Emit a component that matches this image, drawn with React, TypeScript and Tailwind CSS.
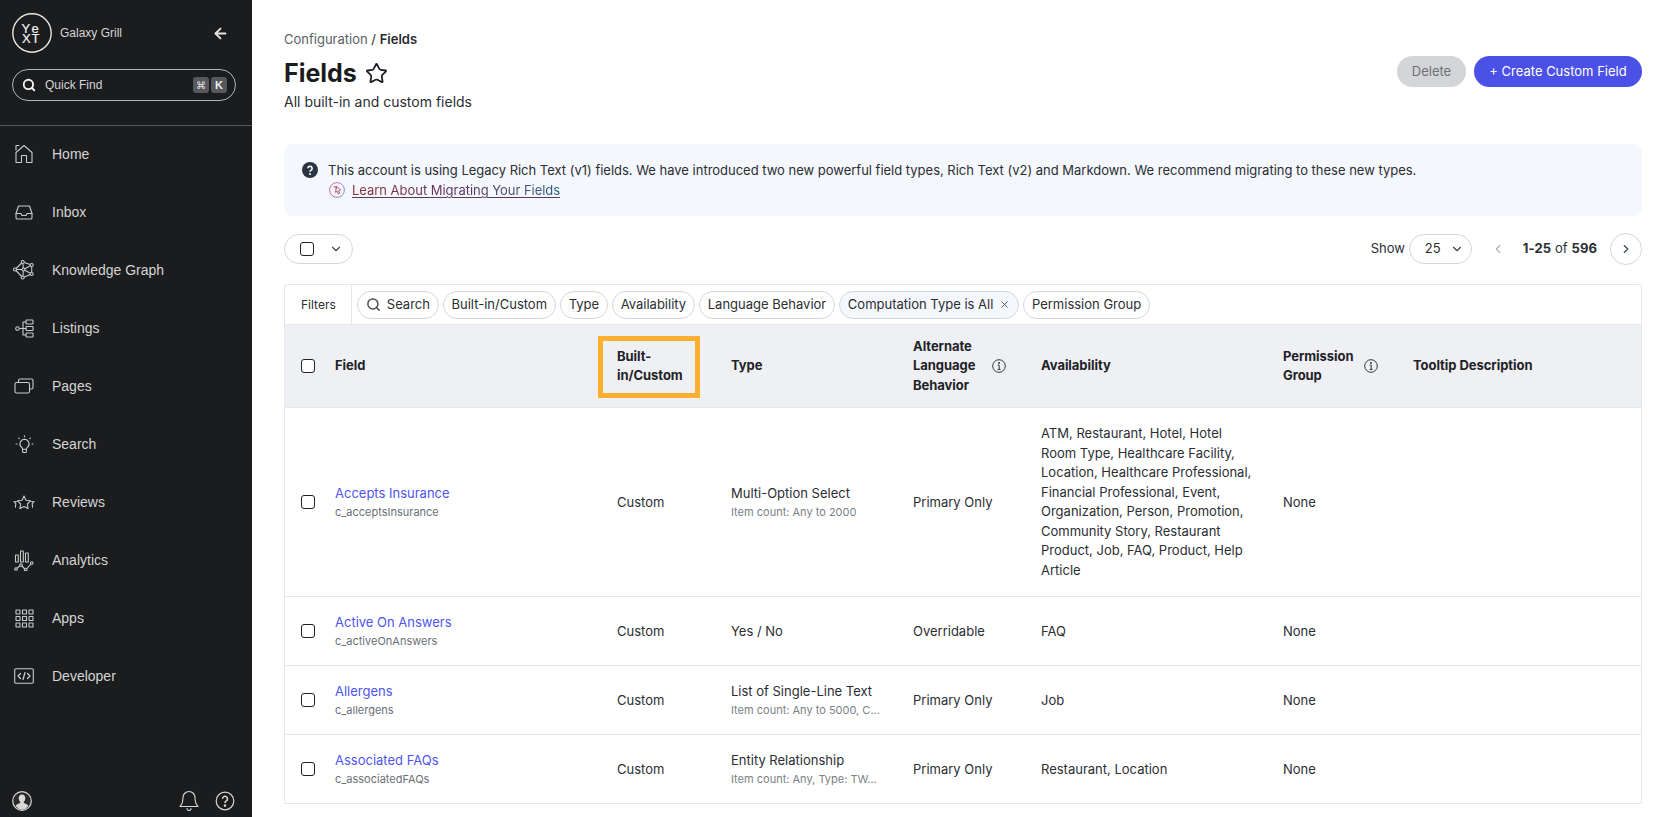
import { ArrowLeft, ChevronDown, ChevronLeft, ChevronRight, Search, Star, X } from "lucide-react";
import type { ReactNode } from "react";

const S = { fill: "none", stroke: "#c9cacb", strokeWidth: 1.1, strokeLinecap: "round" as const, strokeLinejoin: "round" as const };

function Home() {
  return (
    <svg width="18" height="20" viewBox="0 0 18 20" {...S}>
      <path d="M1 18.5V8.5L9 1.5l8 7v10h-5.5v-7h-5v7Z" />
      <path d="M1 6V1.5h3" />
    </svg>
  );
}
function Inbox() {
  return (
    <svg width="18" height="15" viewBox="0 0 18 15" {...S}>
      <path d="M3.5 1h11L17 8.5V12.5a1.5 1.5 0 0 1-1.5 1.5h-13A1.5 1.5 0 0 1 1 12.5V8.5Z" />
      <path d="M1 8.5h5l1 2h4l1-2h5" />
    </svg>
  );
}
function Graph() {
  const n = [[9.7, 2], [18.7, 5], [18.7, 14], [9.7, 17.5], [2, 9.5], [10.5, 9.5]];
  return (
    <svg width="22" height="20" viewBox="0 0 22 20" {...S}>
      <path d="M9.7 2 18.7 5 18.7 14 9.7 17.5 2 9.5Z" />
      <path d="M10.5 9.5 9.7 2M10.5 9.5 18.7 5M10.5 9.5 18.7 14M10.5 9.5 9.7 17.5M10.5 9.5 2 9.5" />
      {n.map(([x, y]) => <circle key={`${x}${y}`} cx={x} cy={y} r="1.5" fill="#1b1c1e" />)}
    </svg>
  );
}
function Listings() {
  return (
    <svg width="19" height="19" viewBox="0 0 19 19" {...S}>
      <circle cx="2.5" cy="9.5" r="1.8" />
      <path d="M4.5 9.5H11M8 3v13M8 3h3M8 16h3" />
      <rect x="11" y="1" width="7" height="4" rx="0.6" />
      <rect x="11" y="7.5" width="7" height="4" rx="0.6" />
      <rect x="11" y="14" width="7" height="4" rx="0.6" />
    </svg>
  );
}
function Pages() {
  return (
    <svg width="20" height="16" viewBox="0 0 20 16" {...S}>
      <rect x="1" y="4.5" width="14.5" height="10.5" rx="1.5" />
      <path d="M4.5 4.5V2.5A1.5 1.5 0 0 1 6 1h11.5A1.5 1.5 0 0 1 19 2.5v7a1.5 1.5 0 0 1-1.5 1.5h-2" />
    </svg>
  );
}
function Bulb() {
  return (
    <svg width="19" height="19" viewBox="0 0 19 19" {...S}>
      <path d="M9.5 4.2a4.6 4.6 0 0 0-2.8 8.2c.7.6.9 1.2.9 1.9h3.8c0-.7.2-1.3.9-1.9a4.6 4.6 0 0 0-2.8-8.2Z" />
      <path d="M7.6 14.3v2.2a1 1 0 0 0 1 1h1.8a1 1 0 0 0 1-1v-2.2M9.5 .8v1M3.6 3l.6.7M15.4 3l-.6.7M1 9h1M17 9h1" />
    </svg>
  );
}
function Reviews() {
  return (
    <svg width="22" height="14" viewBox="0 0 22 14" {...S}>
      <path d="M11 1l2 4.2 4.5.6-3.2 3.2.8 4.5L11 11.4l-4.1 2.1.8-4.5L4.5 5.8 9 5.2Z" />
      <path d="M3.5 6.5l-2.5.4 1.8 1.8-.4 3.6M18.5 6.5l2.5.4-1.8 1.8.4 3.6" />
    </svg>
  );
}
function Analytics() {
  return (
    <svg width="20" height="21" viewBox="0 0 20 21" {...S}>
      <rect x="1.5" y="5" width="2.8" height="7" rx="0.3" />
      <rect x="6.5" y="1" width="2.8" height="11" rx="0.3" />
      <rect x="11.5" y="3" width="2.8" height="9" rx="0.3" />
      <path d="M2 19 7 15l4.7 5 6-7" />
      <circle cx="2" cy="19" r="1.3" fill="#1b1c1e" />
      <circle cx="7" cy="15" r="1.3" fill="#1b1c1e" />
      <circle cx="11.7" cy="19.5" r="1.3" fill="#1b1c1e" />
      <circle cx="17.7" cy="13" r="1.3" fill="#1b1c1e" />
    </svg>
  );
}
function Apps() {
  const c = [1, 7.5, 14];
  return (
    <svg width="19" height="19" viewBox="0 0 19 19" {...S}>
      {c.map((y) => c.map((x) => <rect key={`${x}-${y}`} x={x} y={y} width="4" height="4" rx="0.3" />))}
    </svg>
  );
}
function Developer() {
  return (
    <svg width="20" height="16" viewBox="0 0 20 16" {...S}>
      <rect x="0.7" y="0.7" width="18.6" height="14.6" rx="1.2" />
      <path d="M6.5 5.5 4 8l2.5 2.5M13.5 5.5 16 8l-2.5 2.5M11 4.5 9 11.5" strokeWidth="1.3" />
    </svg>
  );
}

const NAV: [string, ReactNode][] = [
  ["Home", <Home />],
  ["Inbox", <Inbox />],
  ["Knowledge Graph", <Graph />],
  ["Listings", <Listings />],
  ["Pages", <Pages />],
  ["Search", <Bulb />],
  ["Reviews", <Reviews />],
  ["Analytics", <Analytics />],
  ["Apps", <Apps />],
  ["Developer", <Developer />],
];

function Sidebar() {
  return (
    <aside className="w-[252px] shrink-0 h-full bg-[#1b1c1e] flex flex-col font-['Liberation_Sans',sans-serif] text-[#d9d9d9]">
      <div className="flex items-center pl-[12px] pr-[23px] pt-[13px]">
        <svg width="40" height="40" viewBox="0 0 40 40" fill="none">
          <circle cx="20" cy="20" r="19.2" stroke="#e8e8e8" strokeWidth="1.4" />
          <text fontFamily="Liberation Sans" fontSize="13" fill="#f2f2f2" stroke="#f2f2f2" strokeWidth="0.2">
            <tspan x="9.5" y="20">Y</tspan>
            <tspan x="19.5" y="20">e</tspan>
            <tspan x="10" y="30">X</tspan>
            <tspan x="19.5" y="30">T</tspan>
          </text>
        </svg>
        <span className="ml-[8px] text-[12px] text-[#d6d6d6]">Galaxy Grill</span>
        <ArrowLeft className="ml-auto text-[#e4e4e4]" size={17} strokeWidth={2.6} />
      </div>
      <div className="mx-[12px] mt-[16px] h-[32px] w-[224px] rounded-full border border-[#b5b5b5] flex items-center pl-[9px] pr-[8px]">
        <Search className="text-[#f2f2f2]" size={14} strokeWidth={3.2} />
        <span className="ml-[9px] text-[12px] text-[#d6d6d6]">Quick Find</span>
        <span className="ml-auto w-[16px] h-[16px] rounded-[3px] bg-[#56585b] flex items-center justify-center text-[10px] text-[#e6e6e6] font-['DejaVu_Sans',sans-serif]">⌘</span>
        <span className="ml-[2px] w-[16px] h-[16px] rounded-[3px] bg-[#56585b] flex items-center justify-center text-[11px] font-bold text-[#ededed]">K</span>
      </div>
      <div className="mt-[24px] h-px bg-[#55565a]" />
      <nav className="flex flex-col mt-[-1px]">
        {NAV.map(([name, icon]) => (
          <div key={name} className="h-[58px] flex items-center">
            <div className="w-[48px] flex items-center justify-center shrink-0">{icon}</div>
            <span className="ml-[4px] text-[14px] text-[#d4d4d4]">{name}</span>
          </div>
        ))}
      </nav>
      <div className="mt-auto flex items-center pl-[12px] pb-[6px] pr-[17px]">
        <svg width="20" height="20" viewBox="0 0 20 20">
          <circle cx="10" cy="10" r="9.3" fill="#2a2b2d" stroke="#d8d8d8" strokeWidth="1.2" />
          <path d="M10 3.5c2 0 3.3 1.6 3.3 3.8 0 1.6-.8 3-1.6 3.7 0 .8.4 1.2 1.4 1.6 1.5.5 2.7 1.2 3.2 2.3A9 9 0 0 1 10 18.8a9 9 0 0 1-6.3-3.9c.5-1.1 1.7-1.8 3.2-2.3 1-.4 1.4-.8 1.4-1.6-.8-.7-1.6-2.1-1.6-3.7 0-2.2 1.3-3.8 3.3-3.8Z" fill="#d8d8d8" />
        </svg>
        <svg className="ml-auto" width="20" height="21" viewBox="0 0 20 21" {...S} stroke="#d8d8d8">
          <path d="M10 1.5a6 6 0 0 0-6 6c0 5-1 7-3 9h18c-2-2-3-4-3-9a6 6 0 0 0-6-6Z" />
          <path d="M8 18.5a2 2 0 0 0 4 0" />
        </svg>
        <svg className="ml-[16px]" width="20" height="20" viewBox="0 0 20 20" fill="none" stroke="#d8d8d8" strokeWidth="1.2">
          <circle cx="10" cy="10" r="8.8" />
          <path d="M7.5 7.7a2.5 2.5 0 1 1 3.8 2.2c-.9.5-1.3 1-1.3 2" strokeWidth="1.6" />
          <circle cx="10" cy="14.6" r="0.7" fill="#d8d8d8" />
        </svg>
      </div>
    </aside>
  );
}

function Box() {
  return <span className="block w-[14px] h-[14px] rounded-[3px] border border-[#1f2329] bg-white" />;
}

function Chip({ children, active }: { children: ReactNode; active?: boolean }) {
  return (
    <span className={`h-[28px] px-[7.8px] rounded-full border border-[#d5d7db] flex items-center text-[13px] text-[#2b2e33] whitespace-nowrap ${active ? "bg-[#f4f7fc]" : "bg-white"}`}>
      {children}
    </span>
  );
}

function InfoIcon({ className }: { className?: string }) {
  return (
    <svg className={className} width="14" height="14" viewBox="0 0 14 14" fill="none" stroke="#33373d" strokeWidth="1">
      <circle cx="7" cy="7" r="6.3" />
      <path d="M5.6 6.2H7.2V10.4M5.6 10.4H8.6" />
      <circle cx="7" cy="4" r="0.6" fill="#33373d" />
    </svg>
  );
}

const COLS = "grid grid-cols-[50px_282px_114px_182px_128px_242px_130px_1fr] items-center";

function Row({ name, api, type, sub, lang, avail, cls }: { name: string; api: string; type: string; sub?: string; lang: string; avail: string; cls: string }) {
  return (
    <div className={`${COLS} border-b border-[#e5e7ec] pt-[2px] ${cls} text-[13px] leading-[19.5px] text-[#2b2e33]`}>
      <div className="pl-[16px] mt-[-2px]"><Box /></div>
      <div>
        <div className="text-[#4f55f1]">{name}</div>
        <div className="text-[11px] text-[#6b6f76] mt-[-0.5px]">{api}</div>
      </div>
      <div>Custom</div>
      <div>
        <div>{type}</div>
        {sub && <div className="text-[11px] text-[#7b7f86]">{sub}</div>}
      </div>
      <div>{lang}</div>
      <div className={`w-[212px] ${avail.length > 50 ? "mt-[-2px]" : ""}`}>{avail}</div>
      <div>None</div>
      <div />
    </div>
  );
}

function Th({ children }: { children: ReactNode }) {
  return <div className="font-bold text-[13px] leading-[19.5px] text-[#1f2227] tracking-[-0.05px]">{children}</div>;
}

export default function App() {
  return (
    <div className="flex h-screen w-full overflow-hidden bg-white font-['Inter',sans-serif] text-[#2b2e33]">
      <Sidebar />
      <main className="flex-1 min-w-0 pl-[32px] pr-[22px] pt-[29px]">
        <div className="flex items-start justify-between">
          <div>
            <div className="text-[13px] leading-[20px] text-[#5c6068] mt-[-0.5px]">
              Configuration <span className="text-[#2b2e33]">/</span> <span className="font-semibold text-[#26292e]">Fields</span>
            </div>
            <div className="mt-[8.5px] flex items-center h-[32px]">
              <h1 className="text-[25px] font-bold text-[#1a1c20] leading-[32px]">Fields</h1>
              <Star className="ml-[8px] text-[#1f2227]" size={23} strokeWidth={1.9} />
            </div>
            <div className="mt-[3px] text-[14px] leading-[20px] text-[#2b2e33]">All built-in and custom fields</div>
          </div>
          <div className="flex gap-[8px] mt-[27px]">
            <button className="h-[31px] w-[69px] rounded-full bg-[#d3d5d9] text-[13px] text-[#6d7178]">Delete</button>
            <button className="h-[31px] w-[168px] rounded-full bg-[#4b50e6] text-[13px] text-white">+ Create Custom Field</button>
          </div>
        </div>

        <div className="mt-[32px] h-[72px] rounded-[8px] bg-[#f4f7fc] pl-[18px] pt-[16px] flex gap-[10px]">
          <svg className="mt-[2px] shrink-0" width="16" height="16" viewBox="0 0 16 16">
            <circle cx="8" cy="8" r="8" fill="#2a3443" />
            <path d="M5.9 6.3a2.1 2.1 0 1 1 3.3 1.8c-.8.5-1.2.9-1.2 1.6" fill="none" stroke="#fff" strokeWidth="1.6" />
            <circle cx="8" cy="12" r="1" fill="#fff" />
          </svg>
          <div className="text-[13px] leading-[20px] text-[#2b2e33]">
            <div className="tracking-[-0.012px]">This account is using Legacy Rich Text (v1) fields. We have introduced two new powerful field types, Rich Text (v2) and Markdown. We recommend migrating to these new types.</div>
            <div className="flex items-center ml-[1px]">
              <svg width="16" height="16" viewBox="0 0 16 16" fill="none">
                <defs>
                  <linearGradient id="lg" x1="0" y1="0" x2="1" y2="0">
                    <stop offset="0" stopColor="#d9688a" />
                    <stop offset="1" stopColor="#8a8fd8" />
                  </linearGradient>
                </defs>
                <circle cx="8" cy="8" r="7.4" stroke="url(#lg)" strokeWidth="1" />
                <path d="M4.5 4.8h2.6v2.4M7.6 4.4l4 3.4-2 .8 1 2.6-1.5.6-1-2.6-1.6 1.2Z" stroke="#b0476e" strokeWidth="0.9" />
              </svg>
              <span className="ml-[7px] underline decoration-[#5a3a55] underline-offset-2 text-transparent bg-clip-text bg-gradient-to-r from-[#8a2f2f] via-[#5f3360] to-[#1c5c7a] tracking-[-0.03px]">Learn About Migrating Your Fields</span>
            </div>
          </div>
        </div>

        <div className="mt-[17px] h-[31px] flex items-center">
          <div className="h-[30px] w-[69px] rounded-full border border-[#d5d7db] flex items-center pl-[15px]">
            <Box />
            <ChevronDown className="ml-[15px] text-[#3a4657]" size={14} />
          </div>
          <span className="ml-auto text-[13px] text-[#2b2e33]">Show</span>
          <div className="ml-[4px] h-[30px] w-[63px] rounded-full border border-[#d5d7db] flex items-center pl-[15px] text-[13px]">
            25
            <ChevronDown className="ml-[9px] text-[#3a4657]" size={14} />
          </div>
          <ChevronLeft className="ml-[19px] text-[#a9b2bf]" size={14} />
          <span className="ml-[18px] text-[13px] tracking-[0.1px]"><b className="font-bold">1-25</b> of <b className="font-bold">596</b></span>
          <div className="ml-[13px] w-[32px] h-[32px] rounded-full border border-[#d5d7db] flex items-center justify-center">
            <ChevronRight className="text-[#3a4657]" size={14} />
          </div>
        </div>

        <div className="mt-[20px] rounded-t-[4px] border-x border-t border-[#e5e7ec]">
          <div className="h-[39px] flex items-center">
            <div className="w-[67px] h-full flex items-center pl-[16px] border-r border-[#e5e7ec] text-[12px] text-[#2b2e33]">Filters</div>
            <div className="flex items-center gap-[4px] ml-[5px]">
              <Chip><Search className="mr-[6px] text-[#4b4f55]" size={15} strokeWidth={2.4} />Search</Chip>
              <Chip>Built-in/Custom</Chip>
              <Chip>Type</Chip>
              <Chip>Availability</Chip>
              <Chip>Language Behavior</Chip>
              <Chip active>Computation Type is All<X className="ml-[6px] text-[#4b4f55]" size={11} /></Chip>
              <Chip>Permission Group</Chip>
            </div>
          </div>
          <div className={`${COLS} h-[84px] bg-[#eef0f4] border-y border-[#e5e7ec]`}>
            <div className="pl-[16px]"><Box /></div>
            <Th>Field</Th>
            <div className="relative">
              <Th>Built-<br />in/Custom</Th>
              <div className="absolute left-[-19px] top-[-11px] w-[102px] h-[62px] border-[5px] border-[#fdb02f]" />
            </div>
            <Th>Type</Th>
            <div className="flex items-center">
              <Th>Alternate<br />Language<br />Behavior</Th>
              <InfoIcon className="ml-[17px]" />
            </div>
            <Th>Availability</Th>
            <div className="flex items-center">
              <Th>Permission<br />Group</Th>
              <InfoIcon className="ml-[10px]" />
            </div>
            <Th>Tooltip Description</Th>
          </div>
          <Row cls="h-[189px]" name="Accepts Insurance" api="c_acceptsInsurance" type="Multi-Option Select" sub="Item count: Any to 2000" lang="Primary Only" avail="ATM, Restaurant, Hotel, Hotel Room Type, Healthcare Facility, Location, Healthcare Professional, Financial Professional, Event, Organization, Person, Promotion, Community Story, Restaurant Product, Job, FAQ, Product, Help Article" />
          <Row cls="h-[69px]" name="Active On Answers" api="c_activeOnAnswers" type="Yes / No" lang="Overridable" avail="FAQ" />
          <Row cls="h-[69px]" name="Allergens" api="c_allergens" type="List of Single-Line Text" sub="Item count: Any to 5000, C..." lang="Primary Only" avail="Job" />
          <Row cls="h-[69px]" name="Associated FAQs" api="c_associatedFAQs" type="Entity Relationship" sub="Item count: Any, Type: TW..." lang="Primary Only" avail="Restaurant, Location" />
        </div>
      </main>
    </div>
  );
}
